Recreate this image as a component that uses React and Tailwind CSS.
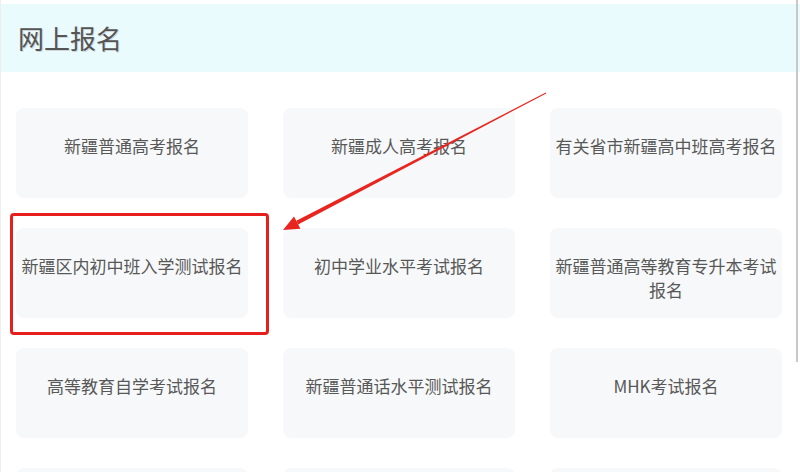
import React from 'react';

const items = [
  '新疆普通高考报名',
  '新疆成人高考报名',
  '有关省市新疆高中班高考报名',
  '新疆区内初中班入学测试报名',
  '初中学业水平考试报名',
  '新疆普通高等教育专升本考试报名',
  '高等教育自学考试报名',
  '新疆普通话水平测试报名',
  'MHK考试报名',
  '',
  '',
  '',
];

function Arrow() {
  // tapered red arrow pointing at the highlighted card
  return (
    <svg className="pointer-events-none absolute left-0 top-0" width="800" height="472" viewBox="0 0 800 472">
      <polygon points="545.2,93.4 544.8,92.6 295.3,220.8 297.1,224.4" fill="#e8261f" />
      <polygon points="282,230 293,216.4 296.2,222.6 299.4,228.8" fill="#e8261f" />
    </svg>
  );
}

export default function App() {
  return (
    <div className="relative h-[472px] w-[800px] overflow-hidden border-l border-[#eeeeee] bg-white font-['Noto_Sans_CJK_SC','Noto_Sans',sans-serif]">
      <div className="pt-[4px]">
        <div className="flex h-[68px] items-center bg-[#e9fbfd] pl-[17px]">
          <h1 className="text-[26px] leading-none text-[#555555] [text-shadow:1px_1px_0_#cfd6d8]">网上报名</h1>
        </div>
      </div>

      <div className="grid grid-cols-[232px_232px_232px] gap-x-[35px] gap-y-[30px] pl-[15px] pt-[36px]">
        {items.map((label, i) => (
          <div
            key={i}
            className="h-[90px] rounded-lg bg-[#f7f8fa] px-[4px] pt-[26px] text-center text-[17px] leading-[24px] text-[#585858]"
          >
            {label}
          </div>
        ))}
      </div>

      <div className="absolute left-[9px] top-[213px] h-[122px] w-[259px] rounded-[4px] border-[3px] border-[#e5201c]" />
      <Arrow />
      <div className="absolute right-[2px] top-0 h-[362px] w-[2px] bg-[#c8c8c8]" />
    </div>
  );
}
